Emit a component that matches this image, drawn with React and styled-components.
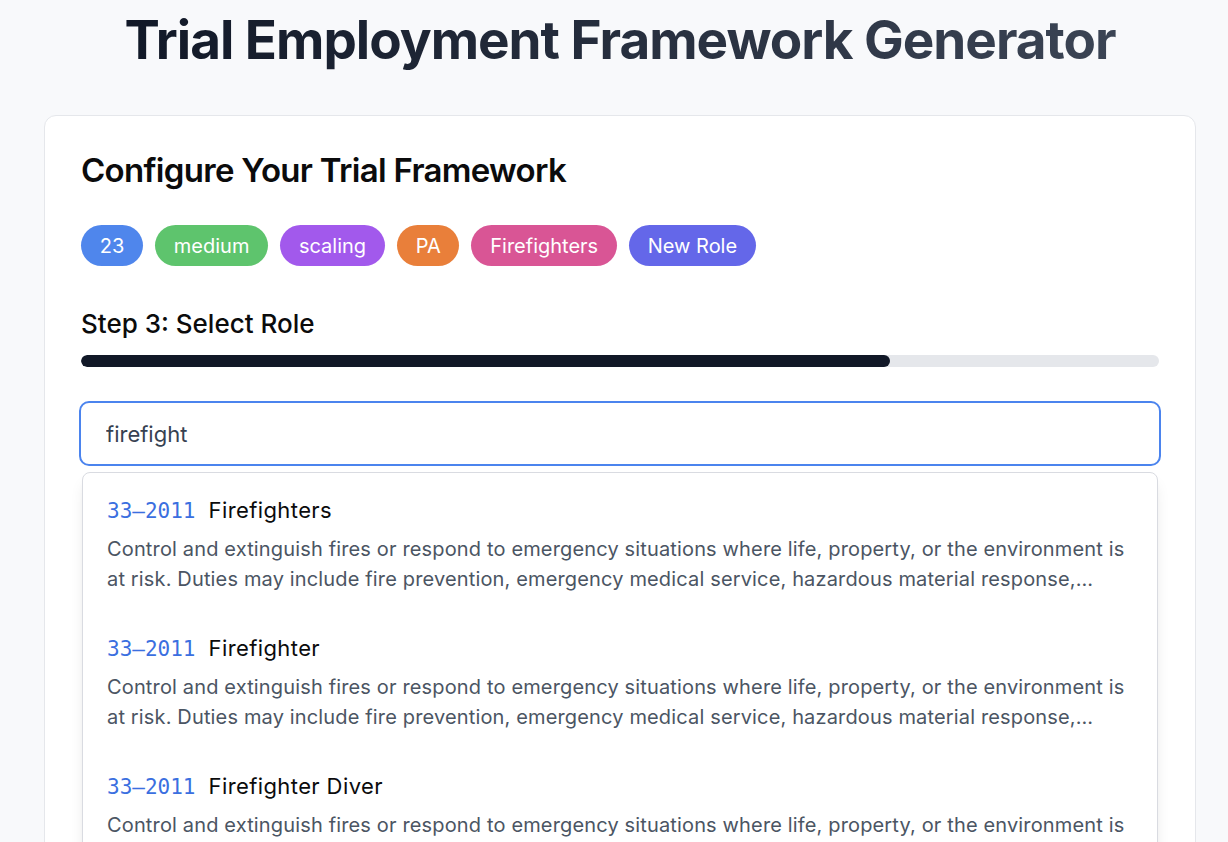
import React, { useState } from "react";
import styled, { createGlobalStyle } from "styled-components";

const GlobalStyle = createGlobalStyle`
  * { box-sizing: border-box; }
  body {
    margin: 0;
    background: #f8f9fb;
    font-family: Inter, "Noto Sans", sans-serif;
    color: #111827;
  }
`;

const Page = styled.div`
  padding: 10px 32px 0 44px;
  display: flex;
  flex-direction: column;
  align-items: stretch;
`;

const Title = styled.h1`
  margin: 0 0 45px;
  text-align: center;
  font-size: 53px;
  line-height: 60px;
  font-weight: 700;
  letter-spacing: -1px;
  background: linear-gradient(90deg, #111827, #3b4454);
  -webkit-background-clip: text;
  background-clip: text;
  color: transparent;
  align-self: center;
`;

const Card = styled.section`
  width: 1152px;
  background: #fff;
  border: 1px solid #e5e7eb;
  border-radius: 12px;
  padding: 32px 36px 40px;
  min-height: 760px;
`;

const CardTitle = styled.h2`
  margin: 0 0 33px;
  font-size: 33px;
  line-height: 44px;
  font-weight: 600;
  letter-spacing: -0.7px;
  color: #0b0b0c;
`;

const BadgeRow = styled.div`
  display: flex;
  gap: 12px;
  flex-wrap: wrap;
  margin-bottom: 41px;
`;

const Badge = styled.span`
  display: inline-flex;
  align-items: center;
  height: 41px;
  padding: 0 18.75px;
  border-radius: 999px;
  background: ${({ $color }) => $color};
  color: #fff;
  font-size: 20px;
`;

const StepLabel = styled.div`
  font-size: 26px;
  line-height: 34px;
  font-weight: 500;
  color: #0b0b0c;
  margin-bottom: 14px;
`;

const Track = styled.div`
  height: 12px;
  border-radius: 999px;
  background: #e5e7eb;
  overflow: hidden;
  margin-bottom: 34px;
`;

const Fill = styled.div`
  height: 100%;
  border-radius: 999px;
  background: #111827;
`;

const SearchWrap = styled.div`
  margin: 0 -2px;
`;

const SearchInput = styled.input`
  width: 100%;
  height: 65px;
  border: 2px solid #4b84ee;
  border-radius: 10px;
  padding: 0 25px;
  font-family: Inter, "Noto Sans", sans-serif;
  font-size: 22px;
  color: #374151;
  outline: none;
  background: #fff;
`;

const Dropdown = styled.ul`
  list-style: none;
  margin: 6px 1px 0;
  padding: 3px 0 0;
  background: #fff;
  border: 1px solid #d9dbe1;
  border-radius: 8px;
  box-shadow: 0 10px 15px -3px rgba(0, 0, 0, 0.1), 0 4px 6px -4px rgba(0, 0, 0, 0.1);
`;

const Item = styled.li`
  padding: 20px 24px;
  cursor: pointer;
`;

const ItemHead = styled.div`
  display: flex;
  align-items: baseline;
  gap: 13px;
  height: 28px;
  line-height: 28px;
  margin-bottom: 10px;
`;

const Code = styled.span`
  font-family: "DejaVu Sans Mono", "Liberation Mono", monospace;
  font-size: 21px;
  color: #3b6fe0;
`;

const RoleName = styled.span`
  font-size: 22px;
  letter-spacing: 0.4px;
  color: #0b0b0c;
`;

const Desc = styled.p`
  margin: 0;
  font-size: 20px;
  letter-spacing: 0.15px;
  line-height: 30px;
  color: #4b5563;
  display: -webkit-box;
  -webkit-line-clamp: 2;
  -webkit-box-orient: vertical;
  overflow: hidden;
`;

const badges = [
  { label: "23", color: "#4f86ec" },
  { label: "medium", color: "#5ec46d" },
  { label: "scaling", color: "#a259ec" },
  { label: "PA", color: "#e97f3a" },
  { label: "Firefighters", color: "#d95595" },
  { label: "New Role", color: "#6467e9" },
];

const desc =
  "Control and extinguish fires or respond to emergency situations where life, property, or the environment is at risk. Duties may include fire prevention, emergency medical service, hazardous material response, search and rescue, and disaster assistance.";

const roles = [
  { code: "33–2011", name: "Firefighters" },
  { code: "33–2011", name: "Firefighter" },
  { code: "33–2011", name: "Firefighter Diver" },
];

export default function App() {
  const [query, setQuery] = useState("firefight");
  const progress = 75;

  return (
    <>
      <GlobalStyle />
      <Page>
        <Title>Trial Employment Framework Generator</Title>
        <Card>
          <CardTitle>Configure Your Trial Framework</CardTitle>
          <BadgeRow>
            {badges.map((b) => (
              <Badge key={b.label} $color={b.color}>
                {b.label}
              </Badge>
            ))}
          </BadgeRow>
          <StepLabel>Step 3: Select Role</StepLabel>
          <Track>
            <Fill style={{ width: `${progress}%` }} />
          </Track>
          <SearchWrap>
            <SearchInput
              value={query}
              onChange={(e) => setQuery(e.target.value)}
            />
          </SearchWrap>
          <Dropdown>
            {roles.map((r) => (
              <Item key={r.name}>
                <ItemHead>
                  <Code>{r.code}</Code>
                  <RoleName>{r.name}</RoleName>
                </ItemHead>
                <Desc>{desc}</Desc>
              </Item>
            ))}
          </Dropdown>
        </Card>
      </Page>
    </>
  );
}
